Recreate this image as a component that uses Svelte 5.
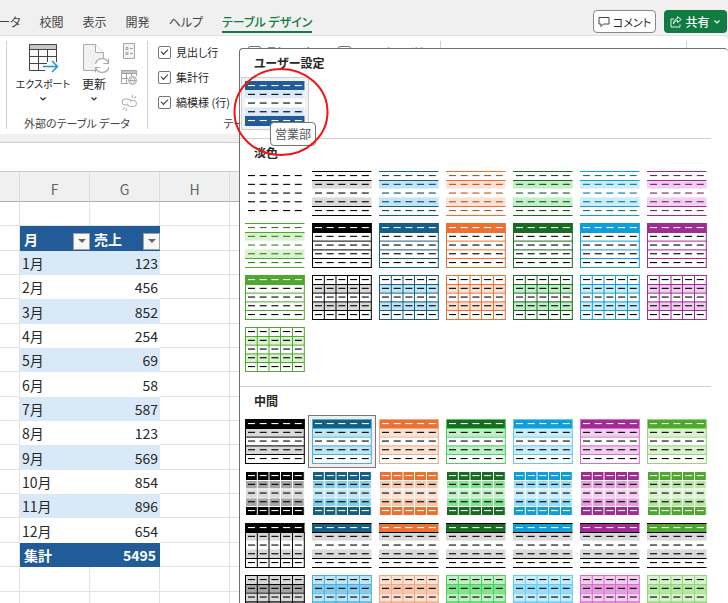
<script>
  // ── Ribbon ────────────────────────────────────────────────────────────────
  const tabs = ['データ', '校閲', '表示', '開発', 'ヘルプ', 'テーブル デザイン']
  const optionCols = [
    [['見出し行', true], ['集計行', true], ['縞模様 (行)', true]],
    [['最初の列', false]],
    [['フィルター ボタン', true]]
  ]

  // ── Sheet ─────────────────────────────────────────────────────────────────
  const sales = [123, 456, 852, 254, 69, 58, 587, 123, 569, 854, 896, 654]
  const total = sales.reduce((a, b) => a + b, 0)

  // ── Style gallery ─────────────────────────────────────────────────────────
  const themes = [
    { name: '黒', main: '#000000', light: '#d9d9d9', mid: '#a6a6a6', line: '#000000', dark: '#000000' },
    { name: '青', main: '#156082', light: '#c0e6f5', mid: '#83cceb', line: '#45b0e1', dark: '#104861' },
    { name: 'オレンジ', main: '#e97132', light: '#fbe2d5', mid: '#f7c7ac', line: '#f1a983', dark: '#be5014' },
    { name: '緑', main: '#196b24', light: '#c1f0c8', mid: '#83e28e', line: '#47d359', dark: '#13501b' },
    { name: '水色', main: '#0f9ed5', light: '#caedfb', mid: '#94dcf8', line: '#61cbf3', dark: '#0b769f' },
    { name: '紫', main: '#a02b93', light: '#f2ceef', mid: '#e49edd', line: '#d86dcd', dark: '#78206e' },
    { name: '黄緑', main: '#4ea72e', light: '#daf2d0', mid: '#b5e6a2', line: '#8ed973', dark: '#3a7c22' }
  ]
  const custom = { name: '営業部', main: '#215c98', light: '#dae9f8', dark: '#000000' }

  const kinds = list => list.flatMap(kind => themes.map(theme => ({ kind, theme })))
  const lightStyles = [{ kind: 'plain', theme: themes[0] }, ...kinds(['stripe', 'header', 'grid'])]
  const mediumStyles = kinds(['band', 'block', 'gray', 'tint'])

  const rowY = [0, 9, 17.6, 26.4, 35, 44]
  const colX = [0, 11.8, 23.5, 35, 47, 58.8]
  const dashY = [4, 12.8, 21.5, 30.2, 39]
  const dashX = [3, 14.7, 26.4, 38.1, 49.8]

  // Row fills from the header row down to the total row
  function fills(kind, t) {
    const n = 'none'
    return {
      plain: [n, n, n, n, n],
      stripe: [n, t.light, n, t.light, n],
      header: [t.main, n, n, n, n],
      grid: [n, t.light, n, t.light, n],
      band: [t.main, t.light, n, t.light, n],
      block: [t.main, t.mid, t.light, t.mid, t.main],
      gray: [t.main, '#d9d9d9', n, '#d9d9d9', n],
      tint: [t.light, t.mid, t.light, t.mid, t.light],
      custom: [t.main, t.light, '#ffffff', t.light, t.main]
    }[kind]
  }

  function hLines(kind) {
    if (kind === 'plain' || kind === 'custom') return []
    if (kind === 'stripe' || kind === 'gray') return [0, 1, 4, 5]
    return [0, 1, 2, 3, 4, 5]
  }

  function vLines(kind, t) {
    if (kind === 'header' || kind === 'band') return [0, 5]
    if (kind === 'grid' || kind === 'block' || kind === 'tint') return [0, 1, 2, 3, 4, 5]
    if (kind === 'gray' && t.main === '#000000') return [0, 1, 2, 3, 4, 5]
    return []
  }

  function lineColor(kind, t) {
    if (kind === 'block') return '#ffffff'
    if (kind === 'gray') return '#000000'
    if (kind === 'band' || kind === 'tint') return t.line
    return t.main
  }

  function dashColor(kind, t, row) {
    if (kind === 'stripe') return t.dark
    if (row === 0 && ['header', 'band', 'block', 'gray', 'custom'].includes(kind)) return '#ffffff'
    if (row === 4 && ['block', 'custom'].includes(kind)) return '#ffffff'
    return '#000000'
  }

  let selected = $state(mediumStyles[1])
</script>

{#snippet swatch(kind, t)}
  <svg viewBox="0 0 60 45" width="60" height="45" aria-hidden="true">
    {#each fills(kind, t) as fill, i}
      <rect x="0" y={rowY[i]} width="59.500" height={(i === 4 ? 45 : rowY[i + 1]) - rowY[i]} {fill} />
    {/each}
    {#each vLines(kind, t) as i}
      <rect x={colX[i]} y={kind === 'gray' ? 9 : 0} width="1" height={kind === 'gray' ? 36 : 45} fill={lineColor(kind, t)} />
    {/each}
    {#each hLines(kind) as i}
      <rect x="0" y={rowY[i]} width="59.500" height="1" fill={lineColor(kind, t)} />
    {/each}
    {#each dashY as y, row}
      {#each dashX as x}
        <rect {x} {y} width="7" height="1.1" fill={dashColor(kind, t, row)} />
      {/each}
    {/each}
  </svg>
{/snippet}

{#snippet chevron()}
  <svg class="chevron" viewBox="0 0 8 6" width="8" height="6" aria-hidden="true">
    <path d="M1.5 1.5 4 4l2.5-2.5" fill="none" stroke="currentColor" stroke-width="1.2" />
  </svg>
{/snippet}

{#snippet cells(n)}
  {#each Array(n) as _}<td></td>{/each}
{/snippet}

<div class="app">
  <header class="topbar">
    <nav>
      {#each tabs as tab, i}
        <a href="#tab{i}" class:active={i === tabs.length - 1}>{tab}</a>
      {/each}
    </nav>
    <div class="actions">
      <button class="comment">
        <svg viewBox="0 0 12 12" width="12" height="12" aria-hidden="true">
          <path d="M1 1.5h10v6.500H5.500L3 10.500V8H1z" fill="none" stroke="#444" />
        </svg>
        コメント
      </button>
      <button class="share">
        <svg viewBox="0 0 12 12" width="12" height="12" aria-hidden="true">
          <path d="M4 3H1v8h9V8.500M3.500 8C4 5.500 5.500 4.500 7.500 4.500V6.500L11.300 3.500 7.500.7v1.800C5 2.800 3.500 5 3.500 8z" fill="none" stroke="#fff" stroke-width=".9" />
        </svg>
        共有
        {@render chevron()}
      </button>
    </div>
  </header>

  <div class="ribbon">
    <section class="group external">
      <div class="tools">
        <button class="tool">
          <svg viewBox="0 0 32 32" width="32" height="32" aria-hidden="true">
            <rect x="2.500" y="3.500" width="27" height="26" fill="#fafafa" />
            <path d="M2 3h28v5H2z" fill="#c8c8c8" />
            <path d="M2.500 3.500h27V21M2.500 3.500v26H18M2.500 8.500h27M2.500 15.500h27M2.500 22.500H20M11.500 8v21M20.500 8v13" fill="none" stroke="#444" />
            <path d="M16 25.500h14.500M25 20l5.500 5.500L25 31" fill="none" stroke="#2b93d1" stroke-width="1.500" />
          </svg>
          <span class="narrow">エクスポート</span>
          {@render chevron()}
        </button>
        <button class="tool">
          <svg viewBox="0 0 32 32" width="32" height="32" aria-hidden="true">
            <path d="M5.500 3.500h12l8 8v18h-20z" fill="#f1f1f1" stroke="#aaa" />
            <path d="M17.500 3.500v8h8" fill="#fff" stroke="#aaa" />
            <circle cx="24" cy="24.500" r="7.500" fill="#fff" />
            <path d="M17.500 23a6.800 6.800 0 0 1 13-1M30.500 17.500v5h-5M30.800 26a6.800 6.800 0 0 1-13 1M17.500 31.500v-5h5" fill="none" stroke="#aaa" stroke-width="1.200" />
          </svg>
          <span>更新</span>
          {@render chevron()}
        </button>
        <div class="side">
          <button aria-label="プロパティ">
            <svg viewBox="0 0 16 18" width="16" height="18" aria-hidden="true">
              <path d="M2.500 1.500h11v15h-11z" fill="#f3f3f3" stroke="#a5a5a5" />
              <path d="M5 5.500h2v2H5zM5 10.500h2v2H5zM9 6.500h3M9 11.500h3" fill="none" stroke="#a5a5a5" />
            </svg>
          </button>
          <button aria-label="ブラウザーで開く">
            <svg viewBox="0 0 16 18" width="16" height="18" aria-hidden="true">
              <path d="M.5 2h15v3H.5z" fill="#c4c4c4" />
              <path d="M.5 2.500h15V8M.5 2.500v13H7M.5 5.500h15M.5 10.500H7M5.500 5v10M10.500 5v3" fill="none" stroke="#a5a5a5" />
              <circle cx="11.500" cy="12.500" r="4" fill="#fff" stroke="#a5a5a5" />
              <path d="M7.500 12.500h8M11.500 8.500c-2.500 2-2.500 6 0 8M11.500 8.500c2.500 2 2.500 6 0 8" fill="none" stroke="#a5a5a5" />
            </svg>
          </button>
          <button aria-label="リンク解除">
            <svg viewBox="0 0 16 18" width="16" height="18" aria-hidden="true">
              <path d="M6.500 11H4a3 3 0 0 1 0-6h3a3 3 0 0 1 3 3M9 6.500h3.500a3 3 0 0 1 0 6H9.500a3 3 0 0 1-3-3M11 4l.7-3M13.500 4.500 15 2M2 16l1.500-2.500M5 17l.6-3" fill="none" stroke="#aaa" />
            </svg>
          </button>
        </div>
      </div>
      <h2>外部のテーブル データ</h2>
    </section>

    <section class="group opts">
      <div class="checks">
        {#each optionCols as col}
          <div class="check-col">
            {#each col as [label, checked]}
              <label><input type="checkbox" {checked} />{label}</label>
            {/each}
          </div>
        {/each}
      </div>
      <h2>テーブル スタイルのオプション</h2>
    </section>
    <section class="group styles" aria-label="テーブル スタイル"></section>
  </div>

  <div class="formula"></div>

  <table class="sheet">
    <colgroup>
      <col class="edge" /><col class="col" /><col class="col" /><col class="col" /><col />
    </colgroup>
    <thead>
      <tr><th></th><th>F</th><th>G</th><th>H</th><th></th></tr>
    </thead>
    <tbody>
      <tr>{@render cells(5)}</tr>
      <tr>
        <td></td>
        {#each ['月', '売上'] as name}
          <td class="in head">
            <div class="field">{name}<button aria-label="{name} フィルター"><i></i></button></div>
          </td>
        {/each}
        {@render cells(2)}
      </tr>
      {#each sales as value, i}
        <tr>
          <td></td>
          <td class="in" class:odd={i % 2 === 0}>{i + 1}月</td>
          <td class="in num" class:odd={i % 2 === 0}>{value}</td>
          {@render cells(2)}
        </tr>
      {/each}
      <tr>
        <td></td>
        <td class="in head">集計</td>
        <td class="in head num">{total}</td>
        {@render cells(2)}
      </tr>
      <tr>{@render cells(5)}</tr>
      <tr>{@render cells(5)}</tr>
    </tbody>
  </table>

  <!-- Drop-down gallery -->
  <div class="gallery">
    <section class="custom">
      <h3>ユーザー設定</h3>
      <div class="swatches">
        <button class="swatch hovered" aria-label={custom.name}>
          {@render swatch('custom', custom)}
        </button>
      </div>
    </section>
    {#each [['淡色', lightStyles], ['中間', mediumStyles]] as [title, list]}
      <section>
        <h3>{title}</h3>
        <div class="swatches">
          {#each list as s}
            <button
              class="swatch"
              class:selected={selected.kind === s.kind && selected.theme.name === s.theme.name}
              aria-label="{title} {s.theme.name}"
              onclick={() => selected = s}
            >
              {@render swatch(s.kind, s.theme)}
            </button>
          {/each}
        </div>
      </section>
    {/each}
    <div class="tip" role="tooltip">{custom.name}</div>
    <svg class="ring" viewBox="0 0 96 90" width="96" height="90" aria-hidden="true">
      <ellipse cx="48" cy="45" rx="46.500" ry="43" fill="none" stroke="#f01414" stroke-width="2" />
    </svg>
  </div>
</div>

<style>
  :global(body) { background: #fff; }

  .app {
    position: relative;
    height: 100vh;
    overflow: hidden;
    background: #f0f0f0;
    color: #262626;
    font: 12px/16px "Noto Sans CJK JP", sans-serif;
    font-feature-settings: "palt";
  }

  button {
    padding: 0;
    border: 0;
    background: none;
    color: inherit;
    font: inherit;
    font-feature-settings: inherit;
  }

  h2, h3 { margin: 0; }
  svg { display: block; }

  /* Tabs */
  .topbar {
    display: flex;
    justify-content: space-between;
    height: 35px;
    border-bottom: 1px solid #e2e2e2;
  }

  nav {
    display: flex;
    gap: 19px;
    align-items: flex-end;
    margin-left: -13px;
    padding-bottom: 2px;
  }

  nav a {
    padding-bottom: 1px;
    border-bottom: 2px solid transparent;
    color: #444;
    text-decoration: none;
    white-space: nowrap;
  }

  nav .active {
    border-color: #107c41;
    color: #107c41;
    font-weight: 500;
  }

  .actions {
    display: flex;
    gap: 8px;
    align-items: flex-start;
    padding: 10px 1px 0 0;
  }

  .actions button {
    display: flex;
    gap: 3px;
    align-items: center;
    justify-content: center;
    box-sizing: border-box;
    width: 63px;
    height: 23px;
    border-radius: 4px;
    font-size: 11px;
    white-space: nowrap;
  }

  .actions .comment { border: 1px solid #888; background: #fff; }
  .actions .share {
    background: #107c41;
    color: #fff;
    font-size: 12px;
    font-weight: 500;
  }

  /* Ribbon */
  .ribbon {
    display: flex;
    height: 98px;
    padding-left: 6px;
    border-radius: 0 6px 0 0;
    background: #fff;
  }

  .group {
    display: flex;
    flex-direction: column;
    justify-content: space-between;
    box-sizing: border-box;
    margin: 5px 0;
    border-left: 1px solid #d0d0d0;
  }

  .external { width: 141px; }
  .opts { width: 293px; }
  .styles { width: 247px; border-right: 1px solid #d0d0d0; }

  .group h2 {
    color: #444;
    font-size: 11px;
    font-weight: 400;
    line-height: 12px;
    text-align: center;
    white-space: nowrap;
  }

  .tools { display: flex; padding-left: 6px; }

  .tool {
    display: flex;
    flex-direction: column;
    align-items: center;
    width: 60px;
    font-size: 12px;
    white-space: nowrap;
  }

  .tool + .tool { width: 42px; }
  .tool .chevron { margin-top: 4px; }
  .tool span { margin-top: 3px; }
  .narrow { font-size: 10px; }

  .side {
    display: flex;
    flex-direction: column;
    gap: 8px;
    padding: 1px 0 0 6px;
  }

  .checks { display: flex; padding-left: 10px; }
  .check-col { display: flex; flex-direction: column; gap: 9px; padding-top: 3px; width: 90px; }

  label {
    display: flex;
    gap: 5px;
    align-items: center;
    font-size: 11px;
    white-space: nowrap;
  }

  input {
    appearance: none;
    display: grid;
    place-content: center;
    flex: none;
    box-sizing: border-box;
    width: 13px;
    height: 13px;
    margin: 0;
    border: 1px solid #777;
    border-radius: 2px;
    background: #fff;
  }

  input:checked::before {
    content: "";
    width: 6px;
    height: 3px;
    margin-top: -2px;
    border: solid #333;
    border-width: 0 0 1px 1px;
    transform: rotate(-45deg);
  }

  .formula {
    height: 28px;
    margin-top: 8px;
    border: solid #ccc;
    border-width: 1px 0;
    background: #fff;
  }

  /* Sheet */
  .sheet {
    table-layout: fixed;
    width: 100%;
    height: 444px;
    border-spacing: 0;
    background: #fff;
    font-size: 14px;
    line-height: 20px;
    font-feature-settings: normal;
  }

  .edge { width: 20px; }
  .col { width: 70px; }

  th {
    height: 30px;
    box-sizing: border-box;
    padding: 4px 0 0;
    border-right: 1px solid #dcdcdc;
    border-bottom: 1px solid #b0b0b0;
    background: #f0f0f0;
    color: #666;
    font-weight: 400;
  }

  td {
    box-sizing: border-box;
    height: 24px;
    padding: 0 2px;
    border: solid #e2e2e2;
    border-width: 0 1px 1px 0;
  }

  td.in { border: 0; }
  td.odd { background: #dae9f8; }
  td.num { text-align: right; }

  td.head {
    padding: 0 4px;
    background: #215c98;
    color: #fff;
    font-weight: 700;
  }

  .field { display: flex; justify-content: space-between; align-items: center; margin-right: -4px; }

  .field button {
    display: grid;
    place-content: center;
    box-sizing: border-box;
    width: 17px;
    height: 17px;
    margin-top: 5px;
    border: 1px solid #a0a0a0;
    background: #f8f8f8;
  }

  .field i {
    border: 4px solid transparent;
    border-top-color: #666;
    border-bottom: 0;
  }

  /* Gallery */
  .gallery {
    position: absolute;
    inset: 48px 0 0 239px;
    border: solid #707070;
    border-width: 1px 0 0 1px;
    border-radius: 4px 4px 0 0;
    background: #fff;
  }

  .gallery section { padding-bottom: 14px; }
  .gallery .custom { padding-bottom: 12px; }

  .gallery section + section::before {
    content: "";
    display: block;
    height: 1px;
    margin-right: 17px;
    background: #d2d2d2;
  }

  h3 {
    padding-left: 14px;
    font-size: 12px;
    font-weight: 700;
    line-height: 28px;
  }

  .swatches {
    display: grid;
    grid-template-columns: repeat(auto-fill, 60px);
    gap: 7px;
    padding: 4px 0 0 5px;
  }

  .hovered { box-shadow: 0 0 0 3px #f2f2f2, 0 0 0 4px #cfcfcf; }
  .selected { box-shadow: 0 0 0 3px #f0f0f0, 0 0 0 4px #7a7a7a; }

  .tip {
    position: absolute;
    top: 73px;
    left: 30px;
    padding: 3px 4px;
    border: 1px solid #777;
    border-radius: 4px;
    background: #fff;
    color: #555;
    font-size: 12px;
  }

  .ring {
    position: absolute;
    top: 18px;
    left: -7px;
    pointer-events: none;
  }
</style>
